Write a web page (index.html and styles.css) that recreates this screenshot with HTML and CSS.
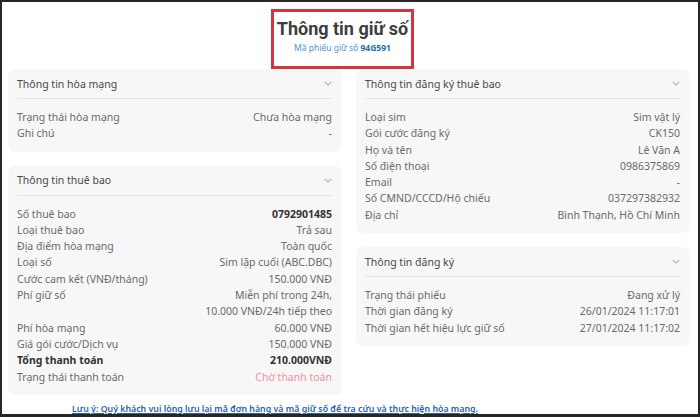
FILE: index.html
```html
<!DOCTYPE html>
<html lang="vi">

<head>
    <meta charset="UTF-8">
    <meta name="viewport" content="width=device-width, initial-scale=1.0">
    <title>Thông tin giữ số</title>
    <link rel="stylesheet" href="styles.css">
</head>

<body>
    <div class="frame">
        <div class="head">
            <div class="title">Thông tin giữ số</div>
            <div class="code">Mã phiếu giữ số <b>94G591</b></div>
        </div>

        <div class="grid">
            <div class="col">
                <div class="card">
                    <div class="card-head">
                        <span>Thông tin hòa mạng</span>
                        <svg class="chev" viewBox="0 0 10 6"><path d="M1 1l4 4 4-4" /></svg>
                    </div>
                    <div class="card-body">
                        <div class="row"><span>Trạng thái hòa mạng</span><span>Chưa hòa mạng</span></div>
                        <div class="row"><span>Ghi chú</span><span>-</span></div>
                    </div>
                </div>

                <div class="card">
                    <div class="card-head">
                        <span>Thông tin thuê bao</span>
                        <svg class="chev" viewBox="0 0 10 6"><path d="M1 1l4 4 4-4" /></svg>
                    </div>
                    <div class="card-body">
                        <div class="row"><span>Số thuê bao</span><span class="strong">0792901485</span></div>
                        <div class="row"><span>Loại thuê bao</span><span>Trả sau</span></div>
                        <div class="row"><span>Địa điểm hòa mạng</span><span>Toàn quốc</span></div>
                        <div class="row"><span>Loại số</span><span>Sim lặp cuối (ABC.DBC)</span></div>
                        <div class="row"><span>Cước cam kết (VNĐ/tháng)</span><span>150.000 VNĐ</span></div>
                        <div class="row"><span>Phí giữ số</span><span>Miễn phí trong 24h,<br>10.000 VNĐ/24h tiếp theo</span></div>
                        <div class="row"><span>Phí hòa mạng</span><span>60.000 VNĐ</span></div>
                        <div class="row"><span>Giá gói cước/Dịch vụ</span><span>150.000 VNĐ</span></div>
                        <div class="row strong"><span>Tổng thanh toán</span><span>210.000VNĐ</span></div>
                        <div class="row"><span>Trạng thái thanh toán</span><span class="pending">Chờ thanh toán</span></div>
                    </div>
                </div>
            </div>

            <div class="col">
                <div class="card">
                    <div class="card-head">
                        <span>Thông tin đăng ký thuê bao</span>
                        <svg class="chev" viewBox="0 0 10 6"><path d="M1 1l4 4 4-4" /></svg>
                    </div>
                    <div class="card-body">
                        <div class="row"><span>Loại sim</span><span>Sim vật lý</span></div>
                        <div class="row"><span>Gói cước đăng ký</span><span>CK150</span></div>
                        <div class="row"><span>Họ và tên</span><span>Lê Văn A</span></div>
                        <div class="row"><span>Số điện thoại</span><span>0986375869</span></div>
                        <div class="row"><span>Email</span><span>-</span></div>
                        <div class="row"><span>Số CMND/CCCD/Hộ chiếu</span><span>037297382932</span></div>
                        <div class="row"><span>Địa chỉ</span><span>Bình Thạnh, Hồ Chí Minh</span></div>
                    </div>
                </div>

                <div class="card">
                    <div class="card-head">
                        <span>Thông tin đăng ký</span>
                        <svg class="chev" viewBox="0 0 10 6"><path d="M1 1l4 4 4-4" /></svg>
                    </div>
                    <div class="card-body">
                        <div class="row"><span>Trạng thái phiếu</span><span>Đang xử lý</span></div>
                        <div class="row"><span>Thời gian đăng ký</span><span>26/01/2024 11:17:01</span></div>
                        <div class="row"><span>Thời gian hết hiệu lực giữ số</span><span>27/01/2024 11:17:02</span></div>
                    </div>
                </div>
            </div>
        </div>

        <div class="note">Lưu ý: Quý khách vui lòng lưu lại mã đơn hàng và mã giữ số để tra cứu và thực hiện hòa mạng.</div>
    </div>
</body>

</html>
```

FILE: styles.css
```css
* {
    box-sizing: border-box;
}

body {
    margin: 0;
    background: #fff;
    font-family: "Noto Sans", "Open Sans", sans-serif;
}

.frame {
    width: 700px;
    height: 417px;
    border: 2px solid #262626;
    border-bottom-width: 3px;
    padding-top: 7px;
    overflow: hidden;
    background: #fff;
}

.head {
    width: 143px;
    height: 60px;
    margin: 0 auto 0 269px;
    border: 3px solid #d2373f;
    text-align: center;
    padding-top: 6px;
}

.title {
    font-family: Roboto, "Noto Sans", sans-serif;
    font-size: 18px;
    font-weight: 700;
    color: #3d3d3d;
    line-height: 22px;
    white-space: nowrap;
}

.code {
    font-size: 8.5px;
    color: #4f93cf;
    line-height: 14px;
    margin-top: 1px;
    white-space: nowrap;
}

.code b {
    color: #236db3;
}

.grid {
    display: grid;
    grid-template-columns: 334px 334px;
    gap: 14px;
    padding-left: 6px;
}

.col {
    display: flex;
    flex-direction: column;
    gap: 14px;
}

.card {
    background: #f7f7f7;
    border-radius: 7px;
    padding: 0 10px 10px 9px;
    font-size: 10.5px;
    color: #6a6a6a;
}

.card-head {
    display: flex;
    justify-content: space-between;
    align-items: center;
    height: 30px;
    border-bottom: 1px solid #e6e6e6;
    color: #484848;
    font-size: 10.5px;
}

.chev {
    width: 8px;
    height: 5px;
    fill: none;
    stroke: #8fb3d6;
    stroke-width: 1.3;
}

.card-body {
    padding-top: 10px;
}

.row {
    display: flex;
    justify-content: space-between;
    line-height: 16.3px;
}

.row span:last-child {
    text-align: right;
}

.strong {
    font-weight: 700;
    color: #333;
}

.pending {
    color: #f2919c;
}

.note {
    margin-top: 7px;
    padding-left: 70px;
    font-size: 8.8px;
    font-weight: 600;
    color: #2a5fb5;
    text-decoration: underline;
    line-height: 14px;
}
```
